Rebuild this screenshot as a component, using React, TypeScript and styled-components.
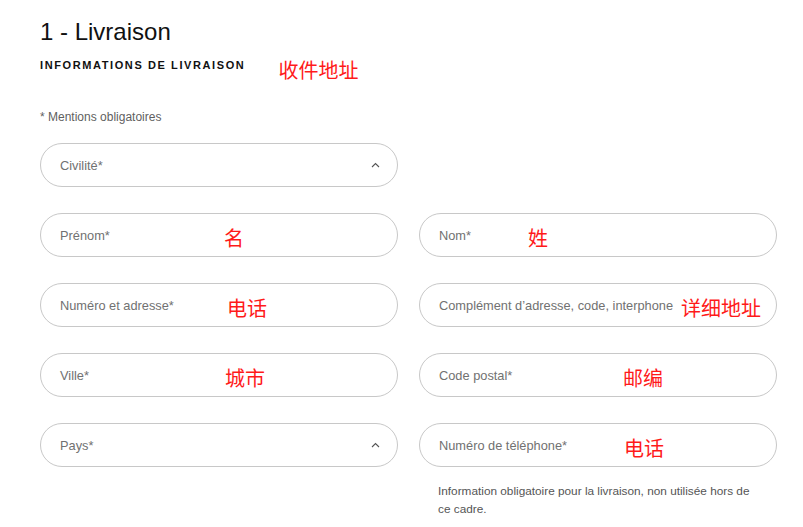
import styled, { createGlobalStyle } from 'styled-components';

const GlobalStyle = createGlobalStyle`
  body {
    margin: 0;
    background: #ffffff;
    font-family: "Liberation Sans", Arial, sans-serif;
  }
`;

type Field = {
  label: string;
  select?: boolean;
  note?: string;
  noteLeft?: number;
};

const rows: (Field | null)[][] = [
  [{ label: 'Civilité*', select: true }, null],
  [
    { label: 'Prénom*', note: '名', noteLeft: 183 },
    { label: 'Nom*', note: '姓', noteLeft: 108 },
  ],
  [
    { label: 'Numéro et adresse*', note: '电话', noteLeft: 186 },
    { label: 'Complément d’adresse, code, interphone', note: '详细地址', noteLeft: 261 },
  ],
  [
    { label: 'Ville*', note: '城市', noteLeft: 184 },
    { label: 'Code postal*', note: '邮编', noteLeft: 203 },
  ],
  [
    { label: 'Pays*', select: true },
    { label: 'Numéro de téléphone*', note: '电话', noteLeft: 204 },
  ],
];

function ChevronUp() {
  return (
    <svg width="9" height="6" viewBox="0 0 9 6" fill="none">
      <path d="M1 5 L4.5 1.5 L8 5" stroke="#555" strokeWidth="1.1" />
    </svg>
  );
}

export default function App() {
  return (
    <>
      <GlobalStyle />
      <Page>
        <Title>1 - Livraison</Title>
        <SectionHeader>
          <SectionTitle>INFORMATIONS DE LIVRAISON</SectionTitle>
          <Note $inline>收件地址</Note>
        </SectionHeader>
        <Required>* Mentions obligatoires</Required>
        <FormGrid>
          {rows.map((row, i) =>
            row.map((field, j) =>
              field ? (
                <Input key={`${i}-${j}`}>
                  <Placeholder>{field.label}</Placeholder>
                  {field.select && <ChevronUp />}
                  {field.note && (
                    <Note style={{ left: field.noteLeft }}>{field.note}</Note>
                  )}
                </Input>
              ) : (
                <div key={`${i}-${j}`} />
              )
            )
          )}
          <div />
          <Help>
            Information obligatoire pour la livraison, non utilisée hors de ce cadre.
          </Help>
        </FormGrid>
      </Page>
    </>
  );
}

const Page = styled.div`
  padding: 18px 0 0 40px;
  width: 737px;
`;

const Title = styled.h1`
  margin: 0;
  font-size: 24px;
  font-weight: 400;
  color: #111;
  line-height: 28px;
`;

const SectionHeader = styled.div`
  display: flex;
  align-items: flex-start;
  gap: 33px;
  margin-top: 12px;
  height: 26px;
`;

const SectionTitle = styled.h2`
  margin: 0;
  font-size: 11px;
  font-weight: 700;
  letter-spacing: 1.6px;
  color: #111;
  line-height: 14px;
`;

const Note = styled.span<{ $inline?: boolean }>`
  font-family: "Noto Sans CJK SC", sans-serif;
  font-size: 20px;
  line-height: 1;
  color: #ff1a1a;
  ${(p) =>
    p.$inline
      ? `position: relative; top: 2px;`
      : `position: absolute; top: 14px;`}
`;

const Required = styled.p`
  margin: 26px 0 0;
  font-size: 12px;
  color: #5f5f5f;
  line-height: 14px;
`;

const FormGrid = styled.div`
  display: grid;
  grid-template-columns: 358px 358px;
  column-gap: 21px;
  row-gap: 26px;
  margin-top: 19px;
`;

const Input = styled.div`
  position: relative;
  height: 44px;
  box-sizing: border-box;
  border: 1px solid #c8c8c8;
  border-radius: 22px;
  display: flex;
  align-items: center;
  justify-content: space-between;
  padding: 0 17px 0 19px;
`;

const Placeholder = styled.span`
  font-size: 12.8px;
  color: #717171;
`;

const Help = styled.p`
  margin: -11px 0 0;
  padding: 0 22px 0 19px;
  font-size: 11.8px;
  line-height: 18px;
  color: #555;
`;
